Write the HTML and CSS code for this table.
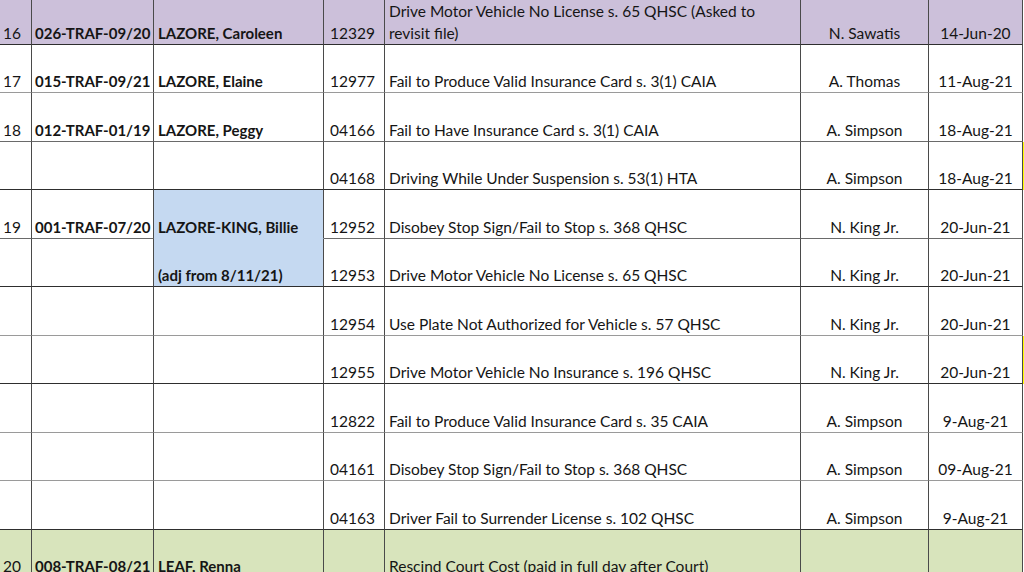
FILE: index.html
```html
<!DOCTYPE html>
<html>
<head>
<meta charset="utf-8">
<link rel="stylesheet" href="styles.css">
</head>
<body>
<div class="sheet">
  <div class="c a purple dk">16</div>
  <div class="c b purple dk">026-TRAF-09/20</div>
  <div class="c n purple dk">LAZORE, Caroleen</div>
  <div class="c d purple dk">12329</div>
  <div class="c e purple dk">Drive Motor Vehicle No License s. 65 QHSC (Asked to<br>revisit file)</div>
  <div class="c f purple dk">N. Sawatis</div>
  <div class="c g purple dk">14-Jun-20</div>
  <div class="c h"></div>

  <div class="c a lt">17</div>
  <div class="c b lt">015-TRAF-09/21</div>
  <div class="c n lt">LAZORE, Elaine</div>
  <div class="c d lt">12977</div>
  <div class="c e lt">Fail to Produce Valid Insurance Card s. 3(1) CAIA</div>
  <div class="c f lt">A. Thomas</div>
  <div class="c g lt">11-Aug-21</div>
  <div class="c h"></div>

  <div class="c a md">18</div>
  <div class="c b md">012-TRAF-01/19</div>
  <div class="c n md">LAZORE, Peggy</div>
  <div class="c d md">04166</div>
  <div class="c e md">Fail to Have Insurance Card s. 3(1) CAIA</div>
  <div class="c f md">A. Simpson</div>
  <div class="c g md">18-Aug-21</div>
  <div class="c h"></div>

  <div class="c a dk"></div>
  <div class="c b dk"></div>
  <div class="c n dk"></div>
  <div class="c d dk">04168</div>
  <div class="c e dk">Driving While Under Suspension s. 53(1) HTA</div>
  <div class="c f dk">A. Simpson</div>
  <div class="c g dk">18-Aug-21</div>
  <div class="c h yellow"></div>

  <div class="c a md">19</div>
  <div class="c b md">001-TRAF-07/20</div>
  <div class="c n blue joined">LAZORE-KING, Billie</div>
  <div class="c d md">12952</div>
  <div class="c e md">Disobey Stop Sign/Fail to Stop s. 368 QHSC</div>
  <div class="c f md">N. King Jr.</div>
  <div class="c g md">20-Jun-21</div>
  <div class="c h"></div>

  <div class="c a dk"></div>
  <div class="c b dk"></div>
  <div class="c n blue dk">(adj from 8/11/21)</div>
  <div class="c d dk">12953</div>
  <div class="c e dk">Drive Motor Vehicle No License s. 65 QHSC</div>
  <div class="c f dk">N. King Jr.</div>
  <div class="c g dk">20-Jun-21</div>
  <div class="c h"></div>

  <div class="c a lt"></div>
  <div class="c b lt"></div>
  <div class="c n lt"></div>
  <div class="c d lt">12954</div>
  <div class="c e lt">Use Plate Not Authorized for Vehicle s. 57 QHSC</div>
  <div class="c f lt">N. King Jr.</div>
  <div class="c g lt">20-Jun-21</div>
  <div class="c h"></div>

  <div class="c a dk"></div>
  <div class="c b dk"></div>
  <div class="c n dk"></div>
  <div class="c d dk">12955</div>
  <div class="c e dk">Drive Motor Vehicle No Insurance s. 196 QHSC</div>
  <div class="c f dk">N. King Jr.</div>
  <div class="c g dk">20-Jun-21</div>
  <div class="c h yellow"></div>

  <div class="c a lt"></div>
  <div class="c b lt"></div>
  <div class="c n lt"></div>
  <div class="c d lt">12822</div>
  <div class="c e lt">Fail to Produce Valid Insurance Card s. 35 CAIA</div>
  <div class="c f lt">A. Simpson</div>
  <div class="c g lt">9-Aug-21</div>
  <div class="c h"></div>

  <div class="c a lt"></div>
  <div class="c b lt"></div>
  <div class="c n lt"></div>
  <div class="c d lt">04161</div>
  <div class="c e lt">Disobey Stop Sign/Fail to Stop s. 368 QHSC</div>
  <div class="c f lt">A. Simpson</div>
  <div class="c g lt">09-Aug-21</div>
  <div class="c h"></div>

  <div class="c a dk"></div>
  <div class="c b dk"></div>
  <div class="c n dk"></div>
  <div class="c d dk">04163</div>
  <div class="c e dk">Driver Fail to Surrender License s. 102 QHSC</div>
  <div class="c f dk">A. Simpson</div>
  <div class="c g dk">9-Aug-21</div>
  <div class="c h"></div>

  <div class="c a green dk">20</div>
  <div class="c b green dk">008-TRAF-08/21</div>
  <div class="c n green dk">LEAF, Renna</div>
  <div class="c d green dk"></div>
  <div class="c e green dk">Rescind Court Cost (paid in full day after Court)</div>
  <div class="c f green dk"></div>
  <div class="c g green dk"></div>
  <div class="c h"></div>
</div>
</body>
</html>
```
FILE: styles.css
```css
html, body {
  margin: 0;
  padding: 0;
  background: #ffffff;
  overflow: hidden;
}

.sheet {
  display: grid;
  grid-template-columns: 32px 122px 170px 61px 416px 128px 94px 1fr;
  grid-template-rows: 45px 48px 49px 48px 49px 48px 49px 48px 49px 48px 49px 48px;
  width: 1024px;
  height: 572px;
  overflow: hidden;
  font-family: Lato, "Open Sans", sans-serif;
  font-size: 15.5px;
  line-height: 22px;
  color: #151515;
}

.c {
  box-sizing: border-box;
  border-right: 1px solid #4a4a4a;
  border-bottom: 1px solid #3a3a3a;
  display: flex;
  align-items: flex-end;
  white-space: nowrap;
  overflow: hidden;
  padding: 0 0 0 4px;
}

.c.lt { border-bottom-color: #9a9a9a; }
.c.md { border-bottom-color: #6a6a6a; }
.c.dk { border-bottom-color: #2e2e2e; }

.a { padding-left: 3px; }
.b { font-weight: 700; font-size: 15px; padding-left: 3px; }
.n { font-weight: 700; font-size: 15px; }
.d { justify-content: flex-end; padding-right: 9px; }
.f { justify-content: center; padding-left: 0; }
.g { justify-content: center; padding-left: 0; }
.h { border-right: none; border-bottom: none; padding: 0; }

.purple { background: #ccc0da; }
.green { background: #d8e4bc; }
.blue { background: #c5d9f1; }
.yellow { background: #ffff00; }
.c.blue.joined { border-bottom-color: #c5d9f1; }
```
